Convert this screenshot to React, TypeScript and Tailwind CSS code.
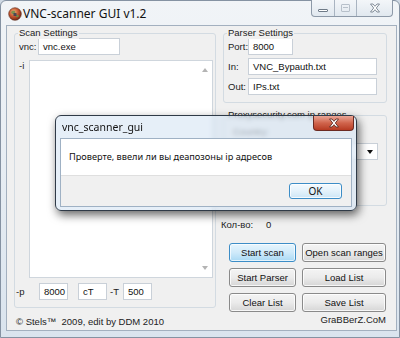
import React from "react";

const uiFont = { fontFamily: '"Liberation Sans", Arial, sans-serif' };
const dlgFont = { fontFamily: '"Noto Sans", "Open Sans", sans-serif' };

function TextBox({ className, value }: { className: string; value: string }) {
  return (
    <div
      className={
        "h-[17px] flex items-center bg-white border border-[#c9d0d8] pl-[4px] text-[9.5px] text-[#111] leading-none " +
        className
      }
    >
      {value}
    </div>
  );
}

function Group({
  title,
  className,
  children,
}: {
  title: string;
  className: string;
  children?: React.ReactNode;
}) {
  return (
    <div className={"relative border border-[#d3dbe2] rounded-[3px] " + className}>
      <span className="absolute -top-[7px] left-[3px] bg-[#f0f0f0] px-[1px] text-[9.5px] leading-[12px] text-[#222] whitespace-nowrap">
        {title}
      </span>
      {children}
    </div>
  );
}

function Btn({ label, primary, className }: { label: string; primary?: boolean; className: string }) {
  return (
    <div
      className={
        "h-[19px] rounded-[3px] flex items-center justify-center text-[9.5px] leading-none text-[#111] " +
        (primary
          ? "border border-[#3c8dc7] bg-gradient-to-b from-[#e6f5fd] via-[#cfeafa] to-[#a9d9f4] shadow-[inset_0_0_0_1px_rgba(255,255,255,0.7)] "
          : "border border-[#8a8a8a] bg-gradient-to-b from-[#f4f4f4] via-[#ebebeb] to-[#d6d6d6] shadow-[inset_0_0_0_1px_rgba(255,255,255,0.8)] ") +
        className
      }
    >
      {label}
    </div>
  );
}

function AppIcon() {
  return (
    <svg width="14" height="14" viewBox="0 0 14 14">
      <defs>
        <radialGradient id="gi" cx="0.4" cy="0.35" r="0.7">
          <stop offset="0" stopColor="#f3b27a" />
          <stop offset="0.55" stopColor="#c0502b" />
          <stop offset="1" stopColor="#6b2414" />
        </radialGradient>
      </defs>
      <circle cx="7" cy="7" r="6.3" fill="url(#gi)" stroke="#5a2a1a" strokeWidth="0.6" />
      <path d="M3 5 Q5 3 7 4 Q8 6 6 7 Q4 8 3 5Z" fill="#6d8f4a" opacity="0.85" />
      <path d="M8 8 Q10 7 11 9 Q10 11 8 10Z" fill="#6d8f4a" opacity="0.85" />
      <rect x="5.5" y="6" width="3" height="3" fill="#2d3a55" opacity="0.8" />
    </svg>
  );
}

export default function App() {
  return (
    <div className="relative w-[400px] h-[338px] overflow-hidden bg-[#cfd9e4]" style={uiFont}>
      <div className="flex flex-col w-full h-full rounded-t-[6px] border border-[#8592a2] bg-gradient-to-b from-[#f1f4f7] via-[#e7edf3] to-[#dae4ee]">
        {/* title bar */}
        <div className="relative h-[24px] flex items-start pl-[7px] pt-[6px]">
          <AppIcon />
          <span className="ml-[1px] text-[12px] leading-[14px] text-[#111]" style={dlgFont}>
            VNC-scanner GUI v1.2
          </span>
          {/* caption buttons */}
          <div className="ml-auto mr-[6px] -mt-[7px] flex h-[17px] border border-t-0 border-[#8d99a8] rounded-b-[4px] overflow-hidden bg-gradient-to-b from-[#f3f6f9] to-[#e1e8ef]">
            <div className="w-[23px] flex items-center justify-center border-r border-[#a9b4c1]">
              <div className="mt-[4px] w-[10px] h-[3px] rounded-[1px] border border-[#6f7b88] bg-white" />
            </div>
            <div className="w-[22px] flex items-center justify-center border-r border-[#a9b4c1]">
              <div className="w-[9px] h-[8px] border border-[#b7c0ca] rounded-[1px] flex items-start justify-center">
                <div className="mt-[2px] w-[5px] h-[1px] bg-[#b7c0ca]" />
              </div>
            </div>
            <div className="w-[35px] flex items-center justify-center">
              <svg width="12" height="10" viewBox="0 0 12 10">
                <path
                  d="M1.5 1 L4 1 L6 3.3 L8 1 L10.5 1 L7.3 5 L10.5 9 L8 9 L6 6.7 L4 9 L1.5 9 L4.7 5 Z"
                  fill="#fff"
                  stroke="#76828f"
                  strokeWidth="0.9"
                  strokeLinejoin="round"
                />
              </svg>
            </div>
          </div>
        </div>

        {/* client area */}
        <div className="flex-1 ml-[5px] mr-[2px] mb-[6px] border border-[#a3b0bf] bg-[#f0f0f0] flex pt-[7px] pl-[7px]">
          {/* left column */}
          <div className="w-[202px] flex flex-col">
            <Group title="Scan Settings" className="h-[275px] flex flex-col pl-[4px] pt-[4px]">
              <div className="flex items-center">
                <span className="w-[19px] text-[9.5px] text-[#222] leading-none">vnc:</span>
                <TextBox className="w-[82px]" value="vnc.exe" />
              </div>
              <div className="flex mt-[5px]">
                <span className="w-[10px] text-[9.5px] text-[#222] leading-none mt-[1px]">-i</span>
                <div className="relative w-[184px] h-[218px] bg-white border border-[#cfd6dd] flex justify-end">
                  <div className="w-[15px] h-full flex flex-col items-center justify-between py-[7px]">
                    <svg width="6" height="4" viewBox="0 0 6 4">
                      <path d="M0 4 L3 0 L6 4Z" fill="#b4b4b4" />
                    </svg>
                    <svg width="6" height="4" viewBox="0 0 6 4">
                      <path d="M0 0 L3 4 L6 0Z" fill="#b4b4b4" />
                    </svg>
                  </div>
                </div>
              </div>
              <div className="flex items-center mt-[5px] -ml-[3px]">
                <span className="w-[23px] text-[9.5px] text-[#222] leading-none">-p</span>
                <TextBox className="w-[29px]" value="8000" />
                <TextBox className="w-[29px] ml-[10px]" value="cT" />
                <span className="w-[16px] pl-[3px] text-[9.5px] text-[#222] leading-none">-T</span>
                <TextBox className="w-[29px]" value="500" />
              </div>
            </Group>
            <div className="mt-[8px] ml-[2px] text-[9.5px] leading-[12px] text-[#222]">
              © Stels™&nbsp; 2009, edit by DDM 2010
            </div>
          </div>

          {/* right column */}
          <div className="ml-[5px] w-[166px] flex flex-col">
            <Group title="Parser Settings" className="ml-[2px] h-[70px] flex flex-col gap-[3px] pl-[4px] pt-[4px]">
              <div className="flex items-center">
                <span className="w-[20px] text-[9.5px] text-[#222] leading-none">Port:</span>
                <TextBox className="w-[45px]" value="8000" />
              </div>
              <div className="flex items-center">
                <span className="w-[20px] text-[9.5px] text-[#222] leading-none">In:</span>
                <TextBox className="w-[129px]" value="VNC_Bypauth.txt" />
              </div>
              <div className="flex items-center">
                <span className="w-[20px] text-[9.5px] text-[#222] leading-none">Out:</span>
                <TextBox className="w-[129px]" value="IPs.txt" />
              </div>
            </Group>

            <Group title="Proxysecurity.com ip ranges" className="ml-[2px] mt-[12px] h-[91px] flex flex-col pl-[9px] pt-[10px]">
              <span className="text-[9.5px] leading-[12px] text-[#555]">Country:</span>
              <div className="mt-[5px] w-[145px] h-[17px] bg-white border border-[#c9d0d8] flex items-center justify-end pr-[4px]">
                <svg width="6" height="4" viewBox="0 0 6 4">
                  <path d="M0 0 L3 4 L6 0Z" fill="#111" />
                </svg>
              </div>
            </Group>

            <div className="mt-[13px] flex items-center text-[9.5px] leading-[12px] text-[#222]">
              <span className="w-[45px]">Кол-во:</span>
              <span>0</span>
            </div>

            <div className="mt-[12px] ml-[8px] grid grid-cols-[67px_84px] gap-x-[6px] gap-y-[6px]">
              <Btn label="Start scan" primary className="" />
              <Btn label="Open scan ranges" className="" />
              <Btn label="Start Parser" className="" />
              <Btn label="Load List" className="" />
              <Btn label="Clear List" className="" />
              <Btn label="Save List" className="" />
            </div>

            <div className="mt-[2px] mr-[1px] self-end text-[9.5px] leading-[12px] text-[#222]">
              GraBBerZ.CoM
            </div>
          </div>
        </div>
      </div>

      {/* message box dialog (overlay) */}
      <div
        className="absolute left-[55px] top-[115px] w-[302px] h-[96px] rounded-[6px] border border-[#2f3a47] bg-[rgba(214,229,244,0.6)] backdrop-blur-[2px] shadow-[2px_4px_10px_rgba(0,0,0,0.6)] flex flex-col"
        style={dlgFont}
      >
        <div className="relative h-[22px] flex items-center pl-[6px] pt-[1px]">
          <span className="text-[10.5px] leading-none text-[#111]">vnc_scanner_gui</span>
          <div className="absolute right-[2px] top-0 w-[41px] h-[15px] rounded-b-[4px] border border-t-0 border-[#6b2a22] bg-gradient-to-b from-[#e9a596] via-[#d0644c] to-[#b63a22] flex items-center justify-center">
            <svg width="12" height="10" viewBox="0 0 12 10">
              <path
                d="M1.5 1 L4 1 L6 3.3 L8 1 L10.5 1 L7.3 5 L10.5 9 L8 9 L6 6.7 L4 9 L1.5 9 L4.7 5 Z"
                fill="#fff"
                stroke="#5c2a24"
                strokeWidth="0.9"
                strokeLinejoin="round"
              />
            </svg>
          </div>
        </div>
        <div className="mx-[4px] mb-[3px] flex-1 border border-[#9fb1c4] flex flex-col">
          <div className="h-[36px] bg-white flex items-center pl-[8px] text-[9.2px] text-[#111]">
            Проверте, ввели ли вы деапозоны ip адресов
          </div>
          <div className="flex-1 bg-[#f0f0f0] border-t border-[#dfdfdf] flex items-start justify-end pr-[9px] pt-[7px]">
            <div className="w-[53px] h-[16px] rounded-[3px] border border-[#3c8dc7] bg-gradient-to-b from-[#f4fafe] via-[#e4f2fb] to-[#cde6f6] shadow-[inset_0_0_0_1px_rgba(255,255,255,0.8)] flex items-center justify-center text-[10px] leading-none text-[#111]">
              OK
            </div>
          </div>
        </div>
      </div>
    </div>
  );
}
